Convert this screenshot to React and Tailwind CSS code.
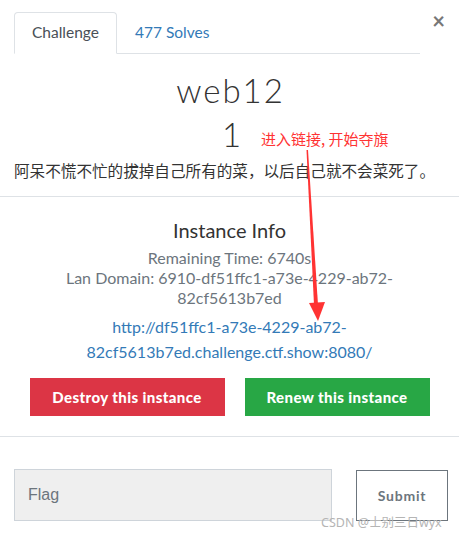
import React from 'react';

function Arrow() {
  return (
    <svg className="absolute left-0 top-0 pointer-events-none" width="459" height="541" viewBox="0 0 459 541">
      <polygon points="306.5,150 308,150 318,305 314,305" fill="#ff3333" />
      <polygon points="309,303 325,302 318,321" fill="#ff3333" />
    </svg>
  );
}

export default function App() {
  const lato = { fontFamily: 'Lato, "Noto Sans CJK SC", sans-serif' };
  return (
    <div className="relative w-[459px] h-[541px] bg-white overflow-hidden text-[#333]" style={lato}>
      <div className="px-[14px] pt-[12px] flex items-end">
        <div className="flex flex-1 border-b border-[#dee2e6]">
          <div className="h-[42px] -mb-px px-[17px] flex items-center border border-[#dee2e6] border-b-white rounded-t-[4px] bg-white text-[15.5px] text-[#495057]">
            Challenge
          </div>
          <div className="h-[41px] px-[18px] flex items-center text-[15.5px] text-[#337ab7]">477 Solves</div>
        </div>
        <div className="w-[25px] self-start -mt-[2px] text-right text-[22px] leading-none font-bold text-[#777]">×</div>
      </div>

      <div className="flex flex-col items-center">
        <div className="mt-[16px] pl-[2px] text-[33px] font-light leading-[40px] tracking-[2px] text-[#333]">web12</div>
        <div className="relative mt-[4px] w-full flex justify-center">
          <span className="text-[33px] font-light leading-[40px] pl-[4px]">1</span>
          <span className="absolute left-[261px] top-[14px] text-[15px] leading-[22px] text-[#ff3333]" style={{ fontFamily: '"Noto Sans CJK SC", sans-serif' }}>
            进入链接, 开始夺旗
          </span>
        </div>
        <div className="w-full px-[14px] mt-[3px] text-[15.6px] leading-[26px] text-[#333]" style={{ fontFamily: '"Noto Sans CJK SC", sans-serif' }}>
          阿呆不慌不忙的拔掉自己所有的菜，以后自己就不会菜死了。
        </div>
      </div>

      <div className="mt-[13px] border-t border-[#dee2e6]" />

      <div className="flex flex-col items-center text-center">
        <div className="mt-[19px] text-[20px] leading-[28px] text-[#333]">Instance Info</div>
        <div className="mt-[4px] text-[16px] leading-[20px] text-[#6c757d]">Remaining Time: 6740s</div>
        <div className="text-[16px] leading-[20px] text-[#6c757d]">
          Lan Domain: 6910-df51ffc1-a73e-4229-ab72-
          <br />
          82cf5613b7ed
        </div>
        <div className="mt-[6px] text-[16px] leading-[25px] text-[#337ab7]">
          http://df51ffc1-a73e-4229-ab72-
          <br />
          82cf5613b7ed.challenge.ctf.show:8080/
        </div>
        <div className="mt-[14px] flex gap-[20px]">
          <button className="w-[195px] h-[38px] bg-[#dc3545] text-white font-black text-[15px] tracking-[0.4px]">Destroy this instance</button>
          <button className="w-[185px] h-[38px] bg-[#28a745] text-white font-black text-[15px] tracking-[0.4px]">Renew this instance</button>
        </div>
      </div>

      <div className="mt-[20px] border-t border-[#dee2e6]" />

      <div className="pl-[14px] mt-[32px] flex items-center">
        <div className="shrink-0 w-[318px] h-[52px] bg-[#efefef] border border-[#ced4da] flex items-center px-[13px] text-[16px] text-[#6c757d]" style={{ fontFamily: '"Liberation Sans", sans-serif' }}>
          Flag
        </div>
        <button className="shrink-0 ml-[24px] w-[92px] h-[51px] border border-[#6c757d] bg-white text-[14px] font-bold tracking-[0.8px] text-[#6c757d]">Submit</button>
      </div>

      <div className="absolute left-[321px] top-[515px] text-[12.5px] leading-[16px] text-[#b5b5b5]" style={{ fontFamily: '"Noto Sans", "Noto Sans CJK SC", sans-serif' }}>
        CSDN @士别三日wyx
      </div>

      <Arrow />
    </div>
  );
}
